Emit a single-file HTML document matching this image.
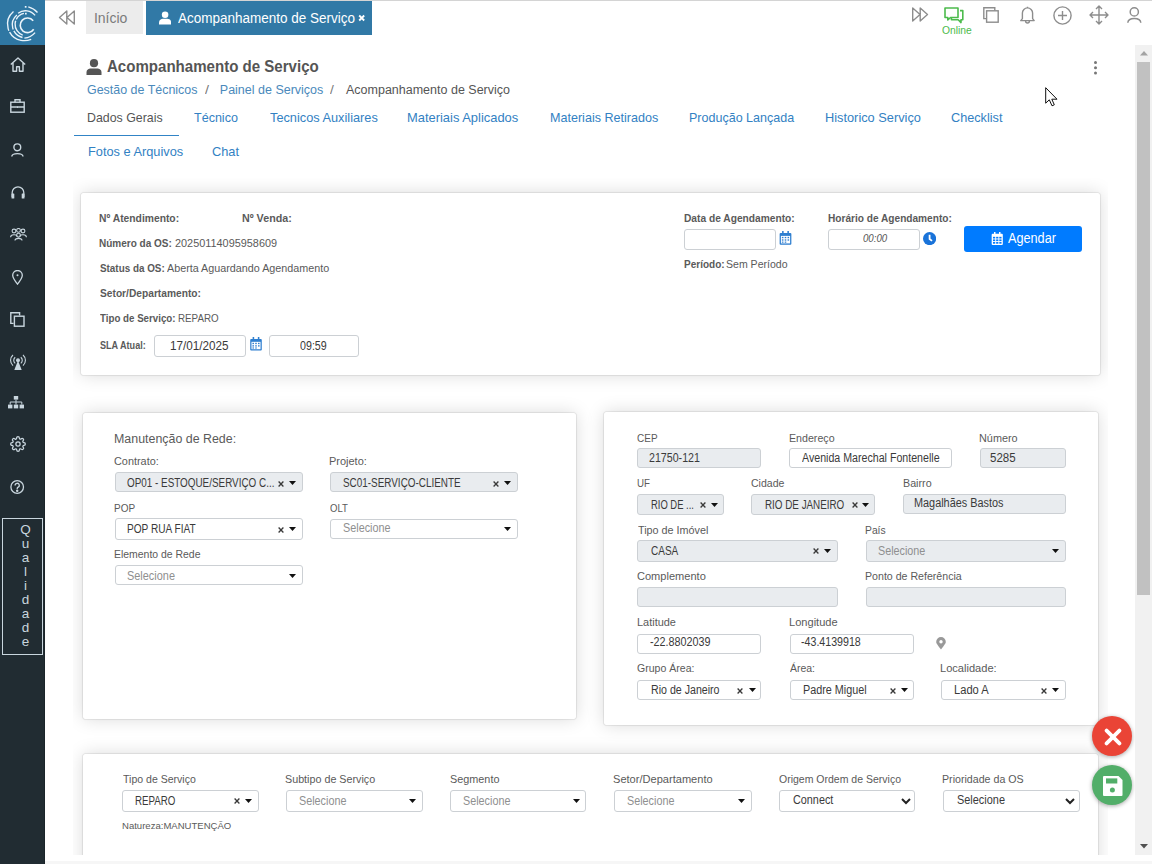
<!DOCTYPE html>
<html><head><meta charset="utf-8">
<style>
*{box-sizing:border-box;margin:0;padding:0}
html,body{width:1152px;height:864px;overflow:hidden;background:#fff;font-family:"Liberation Sans",sans-serif;color:#333}
.a{position:absolute;white-space:nowrap;line-height:normal;transform-origin:0 0}
.card{position:absolute;background:#fff;border-radius:2px;box-shadow:0 0 0 .6px rgba(0,0,0,.07),0 0 2px rgba(0,0,0,.12),0 0 18px rgba(0,0,0,.15)}
#clip{position:absolute;left:72.5px;top:177.7px;width:1035.5px;height:677.3px;overflow:hidden}
#clip .card{margin-left:-72.5px;margin-top:-177.7px}
b{color:#5a5a5a}
</style></head>
<body>

<div class="a" style="left:0;top:0;width:45px;height:864px;background:#212c32;border-right:1px solid #1a2429"></div>
<div class="a" style="left:0;top:0;width:44.5px;height:44.5px;background:#2f77a3"></div>
<svg class="a" style="left:0;top:0" width="45" height="45" viewBox="0 0 45 45" fill="none" stroke="#eaf4fb" stroke-width="1.35" stroke-linecap="butt">
  <path d="M33.2 20.7 A7.3 7.3 0 1 0 33.7 29.2" stroke-width="1.6"/>
  <path d="M23.9 13.4 A11.3 11.3 0 0 0 22.7 35.1" stroke-dasharray="10 1.5 40"/>
  <path d="M18.1 13.2 A12.3 12.3 0 0 1 35.1 15.4"/>
  <path d="M16.9 14.9 A13 13 0 0 0 22.5 37.5" stroke-dasharray="16 1.5 40"/>
  <path d="M24.4 38.2 A17.2 17.2 0 0 0 35.1 32.6"/>
  <path d="M13.5 11.5 A16.5 16.5 0 0 0 21 40.4 A19.4 19.4 0 0 0 31.2 39.4" stroke-dasharray="21 1.6 60"/>
  <path d="M28.3 6.9 A18 18 0 0 1 37.5 12.5"/>
  <rect x="24.8" y="6" width="1.7" height="1.7" fill="#eaf4fb" stroke="none"/>
  <rect x="25" y="12.8" width="1.7" height="1.7" fill="#eaf4fb" stroke="none"/>
</svg>
<!-- sidebar icons -->
<svg class="a" style="left:9.5px;top:56.5px" width="16" height="15" viewBox="0 0 16 15" fill="none" stroke="#c9d6de" stroke-width="1.4" stroke-linejoin="round"><path d="M0.8 7.6 L8 1 L15.2 7.6 M3 5.8 V14.2 H6.6 V9.8 H9.4 V14.2 H13 V5.8"/></svg>
<svg class="a" style="left:10px;top:98.5px" width="15" height="14" viewBox="0 0 15 14" fill="none" stroke="#c9d6de" stroke-width="1.4"><rect x="0.8" y="3.2" width="13.4" height="10"/><path d="M0.8 8 H14.2 M5 3.2 V0.8 H10 V3.2"/><rect x="7" y="7.5" width="1" height="1.4" fill="#c9d6de" stroke="none"/></svg>
<svg class="a" style="left:11px;top:143px" width="13" height="14" viewBox="0 0 13 14" fill="none" stroke="#c9d6de" stroke-width="1.4"><circle cx="6.3" cy="4.3" r="3.4"/><path d="M0.8 13.5 C1 9.6 11.8 9.6 12 13.5"/></svg>
<svg class="a" style="left:11px;top:186px" width="14" height="13" viewBox="0 0 14 13" fill="none" stroke="#c9d6de" stroke-width="1.3"><path d="M1.2 11 V6.6 A5.8 5.8 0 0 1 12.8 6.6 V11"/><rect x="0.5" y="7.4" width="2.8" height="5.2" rx=".6" fill="#c9d6de" stroke="none"/><rect x="10.7" y="7.4" width="2.8" height="5.2" rx=".6" fill="#c9d6de" stroke="none"/></svg>
<svg class="a" style="left:9.5px;top:227.5px" width="17" height="13" viewBox="0 0 17 13" fill="none" stroke="#c9d6de" stroke-width="1.1"><circle cx="4" cy="3" r="1.9"/><circle cx="13" cy="3" r="1.9"/><circle cx="8.5" cy="2.4" r="1.9"/><circle cx="8.5" cy="7.2" r="1.9"/><path d="M0.6 9.2 C0.6 6 7 6 7 8.5 M10 8.5 C10 6 16.4 6 16.4 9.2 M5 12.5 C5 9.6 12 9.6 12 12.5"/></svg>
<svg class="a" style="left:12px;top:270px" width="11" height="15" viewBox="0 0 11 15" fill="none" stroke="#c9d6de" stroke-width="1.3"><path d="M5.5 14.2 C1.8 9.5 0.7 7.6 0.7 5.3 A4.8 4.8 0 0 1 10.3 5.3 C10.3 7.6 9.2 9.5 5.5 14.2 Z"/><circle cx="5.5" cy="5.2" r="1" fill="#c9d6de" stroke="none"/></svg>
<svg class="a" style="left:10px;top:312px" width="15" height="15" viewBox="0 0 15 15" fill="none" stroke="#c9d6de" stroke-width="1.4"><path d="M3.6 11.4 H0.8 V0.8 H9.6 V3.4"/><rect x="4.4" y="4.2" width="9.6" height="10"/></svg>
<svg class="a" style="left:9.5px;top:353.5px" width="16" height="16" viewBox="0 0 16 16" fill="none" stroke="#c9d6de" stroke-width="1.1"><path d="M5.2 3.2 A4 4 0 0 0 5.2 9.4 M10.8 3.2 A4 4 0 0 1 10.8 9.4 M3 1 A7 7 0 0 0 3 11.6 M13 1 A7 7 0 0 1 13 11.6"/><circle cx="8" cy="6.3" r="1.4" fill="#c9d6de"/><path d="M8 6.5 L4.3 16 H11.7 Z" fill="#c9d6de" stroke="none"/></svg>
<svg class="a" style="left:8px;top:396px" width="16" height="13" viewBox="0 0 16 13" fill="#c9d6de"><rect x="5.8" y="0" width="4.4" height="3.6"/><rect x="0" y="8.6" width="4.4" height="3.8"/><rect x="5.8" y="8.6" width="4.4" height="3.8"/><rect x="11.6" y="8.6" width="4.4" height="3.8"/><path d="M8 3.6 V8.6 M2.2 8.6 V6 H13.8 V8.6" stroke="#c9d6de" stroke-width="1" fill="none"/></svg>
<svg class="a" style="left:9.5px;top:435.5px" width="16" height="16" viewBox="0 0 24 24" fill="none" stroke="#c9d6de" stroke-width="1.9"><circle cx="12" cy="12" r="3.2"/><path d="M19.4 15a1.65 1.65 0 0 0 .33 1.82l.06.06a2 2 0 0 1-2.83 2.83l-.06-.06a1.65 1.65 0 0 0-1.82-.33 1.65 1.65 0 0 0-1 1.51V21a2 2 0 0 1-4 0v-.09A1.65 1.65 0 0 0 9 19.4a1.65 1.65 0 0 0-1.82.33l-.06.06a2 2 0 0 1-2.83-2.83l.06-.06A1.65 1.65 0 0 0 4.68 15a1.65 1.65 0 0 0-1.51-1H3a2 2 0 0 1 0-4h.09A1.65 1.65 0 0 0 4.6 9a1.65 1.65 0 0 0-.33-1.82l-.06-.06a2 2 0 0 1 2.83-2.83l.06.06A1.65 1.65 0 0 0 9 4.68a1.65 1.65 0 0 0 1-1.51V3a2 2 0 0 1 4 0v.09a1.65 1.65 0 0 0 1 1.51 1.65 1.65 0 0 0 1.82-.33l.06-.06a2 2 0 0 1 2.83 2.83l-.06.06A1.65 1.65 0 0 0 19.4 9a1.65 1.65 0 0 0 1.51 1H21a2 2 0 0 1 0 4h-.09a1.65 1.65 0 0 0-1.51 1z"/></svg>
<svg class="a" style="left:10px;top:479.5px" width="15" height="15" viewBox="0 0 15 15" fill="none" stroke="#c9d6de" stroke-width="1.3"><circle cx="7.2" cy="7" r="6.3"/><path d="M5.1 5.5 A2.1 2.1 0 1 1 7.8 7.4 C7.3 7.7 7.2 8.1 7.2 8.9"/><circle cx="7.2" cy="10.7" r=".6" fill="#c9d6de"/></svg>
<div class="a" style="left:2.2px;top:518.2px;width:40.8px;height:136.6px;border:1px solid #c9d6de"></div>
<div class="a" style="left:16px;top:523px;width:19px;text-align:center;font-size:13.5px;line-height:13.95px;color:#c9d6de;white-space:normal">Q<br>u<br>a<br>l<br>i<br>d<br>a<br>d<br>e</div>

<!-- top bar -->
<div class="a" style="left:45px;top:0;width:1107px;height:1px;background:#d4d4d4"></div>
<svg class="a" style="left:58px;top:10px" width="18" height="15" viewBox="0 0 18 15" fill="none" stroke="#8d8d8d" stroke-width="1.4" stroke-linejoin="round"><path d="M8.8 1 L1.5 7.5 L8.8 14 Z M16.3 1 L9 7.5 L16.3 14 Z"/></svg>
<div class="a" style="left:86px;top:1px;width:57px;height:33.3px;background:#ececec"></div>
<div class="a" style="left:146px;top:1px;width:226px;height:33.7px;background:#3179a6"></div>
<svg class="a" style="left:158.8px;top:10.9px" width="12.2" height="13.8" viewBox="0 0 13 14" fill="#fff"><circle cx="6.5" cy="3.6" r="3.5"/><path d="M0 14 V12 C0 9.2 2.3 8 4.2 8 H8.8 C10.7 8 13 9.2 13 12 V14 Z"/></svg>
<svg class="a" style="left:358px;top:14px" width="7.4" height="8" viewBox="0 0 7 8"><path d="M1 1.5L6 6.5M6 1.5L1 6.5" stroke="#fff" stroke-width="1.8"/></svg>

<!-- right top icons -->
<svg class="a" style="left:910.5px;top:7px" width="18" height="15" viewBox="0 0 18 15" fill="none" stroke="#8d8d8d" stroke-width="1.4" stroke-linejoin="round"><path d="M9.2 1 L16.5 7.5 L9.2 14 Z M1.7 1 L9 7.5 L1.7 14 Z"/></svg>
<svg class="a" style="left:944px;top:7px" width="20" height="17" viewBox="0 0 20 17" fill="none" stroke="#4cbb4c" stroke-width="1.6" stroke-linejoin="round"><path d="M1 1 H14 V10.5 H6.5 L3.8 13 V10.5 H1 Z"/><path d="M16 3.6 H18.8 V12.8 H17 V15.6 L14.2 12.8 H7.4 V11"/></svg>
<svg class="a" style="left:982.5px;top:7px" width="16" height="16" viewBox="0 0 16 16" fill="none" stroke="#8d8d8d" stroke-width="1.4"><path d="M3.4 11.6 H0.8 V0.8 H11.8 V3.4"/><rect x="3.6" y="3.8" width="11.6" height="11.4"/></svg>
<svg class="a" style="left:1019.5px;top:6px" width="15" height="18" viewBox="0 0 15 18" fill="none" stroke="#8d8d8d" stroke-width="1.4" stroke-linejoin="round"><path d="M0.8 14.6 H14.2 L12.6 12.6 V7 A5.1 5.1 0 0 0 2.4 7 V12.6 Z M7.5 0.8 V1.8 M5.6 15 A1.9 2 0 0 0 9.4 15"/></svg>
<svg class="a" style="left:1052.5px;top:5.5px" width="19" height="19" viewBox="0 0 19 19" fill="none" stroke="#8d8d8d" stroke-width="1.4"><circle cx="9.5" cy="9.5" r="8.6"/><path d="M9.5 5 V14 M5 9.5 H14"/></svg>
<svg class="a" style="left:1088.5px;top:4.5px" width="20" height="20" viewBox="0 0 20 20" fill="none" stroke="#8d8d8d" stroke-width="1.4" stroke-linejoin="round"><path d="M10 1 V19 M1 10 H19 M7 4 L10 1 L13 4 M7 16 L10 19 L13 16 M4 7 L1 10 L4 13 M16 7 L19 10 L16 13"/></svg>
<svg class="a" style="left:1127px;top:7px" width="15" height="16" viewBox="0 0 15 16" fill="none" stroke="#8d8d8d" stroke-width="1.5"><circle cx="7.3" cy="4.9" r="4.1"/><path d="M0.8 15.8 C1.2 10.2 13.4 10.2 13.8 15.8"/></svg>

<!-- page header -->
<svg class="a" style="left:85.5px;top:58.5px" width="16" height="16" viewBox="0 0 16 16" fill="#555"><circle cx="8" cy="4.2" r="4.1"/><path d="M0.5 16 V13.6 C0.5 10.6 2.8 9.6 4.8 9.6 H11.2 C13.2 9.6 15.5 10.6 15.5 13.6 V16 Z"/></svg>
<div class="a" style="left:1093.6px;top:60.6px;width:3px;height:3px;border-radius:50%;background:#777;box-shadow:0 5.2px 0 #777,0 10.4px 0 #777"></div>
<div class="a" style="left:74px;top:135px;width:104.6px;height:1.3px;background:#3184c6"></div>

<div id="clip">
<div class="card" style="left:80.5px;top:192.8px;width:1019.7px;height:182.4px"></div>
<div class="card" style="left:82.6px;top:412.5px;width:493.4px;height:306.7px"></div>
<div class="card" style="left:604.4px;top:412.4px;width:493.7px;height:313px"></div>
<div class="card" style="left:82.7px;top:753.7px;width:1015.6px;height:126.3px"></div>
</div>
<div class="a" style="left:154.4px;top:335.4px;width:91.2px;height:21.2px;border:1px solid #ccd0d4;border-radius:3px;background:#fff"></div>
<div class="a" style="left:268.7px;top:335.4px;width:89.9px;height:21.2px;border:1px solid #ccd0d4;border-radius:3px;background:#fff"></div>
<div class="a" style="left:684.2px;top:229.2px;width:91.4px;height:20.4px;border:1px solid #ccd0d4;border-radius:3px;background:#fff"></div>
<div class="a" style="left:828.2px;top:229.4px;width:91.4px;height:20.4px;border:1px solid #ccd0d4;border-radius:3px;background:#fff"></div>
<div class="a" style="left:964px;top:226.3px;width:117.8px;height:25.3px;background:#007bff;border-radius:3px"></div>
<svg class="a" style="left:250px;top:337px" width="12" height="13.5" viewBox="0 0 12 14" fill="#2f7fd0"><rect x="0" y="2" width="12" height="12" rx="1"/><rect x="2.5" y="0" width="1.6" height="3"/><rect x="7.9" y="0" width="1.6" height="3"/><rect x="1.3" y="5" width="9.4" height="7.7" fill="#fff"/><g fill="#2f7fd0"><rect x="2.3" y="6" width="1.6" height="1.4"/><rect x="5.2" y="6" width="1.6" height="1.4"/><rect x="8.1" y="6" width="1.6" height="1.4"/><rect x="2.3" y="8.5" width="1.6" height="1.4"/><rect x="5.2" y="8.5" width="1.6" height="1.4"/><rect x="8.1" y="8.5" width="1.6" height="1.4"/><rect x="2.3" y="10.8" width="1.6" height="1.2"/><rect x="5.2" y="10.8" width="1.6" height="1.2"/></g></svg>
<svg class="a" style="left:779px;top:231px" width="13" height="13.7" viewBox="0 0 12 14" fill="#2f7fd0"><rect x="0" y="2" width="12" height="12" rx="1"/><rect x="2.5" y="0" width="1.6" height="3"/><rect x="7.9" y="0" width="1.6" height="3"/><rect x="1.3" y="5" width="9.4" height="7.7" fill="#fff"/><g fill="#2f7fd0"><rect x="2.3" y="6" width="1.6" height="1.4"/><rect x="5.2" y="6" width="1.6" height="1.4"/><rect x="8.1" y="6" width="1.6" height="1.4"/><rect x="2.3" y="8.5" width="1.6" height="1.4"/><rect x="5.2" y="8.5" width="1.6" height="1.4"/><rect x="8.1" y="8.5" width="1.6" height="1.4"/><rect x="2.3" y="10.8" width="1.6" height="1.2"/><rect x="5.2" y="10.8" width="1.6" height="1.2"/></g></svg>
<svg class="a" style="left:923px;top:231.5px" width="13.2" height="13.2" viewBox="0 0 14 14"><circle cx="7" cy="7" r="7" fill="#1a73d9"/><path d="M7 3 V7.5 L9.6 9.4" stroke="#fff" stroke-width="1.9" fill="none"/></svg>
<svg class="a" style="left:991px;top:232px" width="12.5" height="13" viewBox="0 0 12 14" fill="#fff"><rect x="0" y="2" width="12" height="12" rx="1"/><rect x="2.5" y="0" width="1.6" height="3"/><rect x="7.9" y="0" width="1.6" height="3"/><g fill="#007bff"><rect x="1.4" y="5.2" width="2.4" height="1.8"/><rect x="4.8" y="5.2" width="2.4" height="1.8"/><rect x="8.2" y="5.2" width="2.4" height="1.8"/><rect x="1.4" y="8" width="2.4" height="1.8"/><rect x="4.8" y="8" width="2.4" height="1.8"/><rect x="8.2" y="8" width="2.4" height="1.8"/><rect x="1.4" y="10.8" width="2.4" height="1.8"/><rect x="4.8" y="10.8" width="2.4" height="1.8"/><rect x="8.2" y="10.8" width="2.4" height="1.8"/></g></svg>

<div class="a" style="left:115.2px;top:472.2px;width:187.5px;height:20.3px;border:1px solid #ccd0d4;border-radius:3px;background:#e9ecef"></div>
<svg class="a" style="left:277.8px;top:480.8px" width="6" height="6" viewBox="0 0 6 6"><path d="M.6 .6L5.4 5.4M5.4 .6L.6 5.4" stroke="#3a3a3a" stroke-width="1.35"/></svg>
<svg class="a" style="left:288.9px;top:480.8px" width="7" height="4" viewBox="0 0 7 4"><path d="M0 0H7L3.5 4Z" fill="#111"/></svg>
<div class="a" style="left:330px;top:472.2px;width:187.6px;height:20.3px;border:1px solid #ccd0d4;border-radius:3px;background:#e9ecef"></div>
<svg class="a" style="left:492.5px;top:480.8px" width="6" height="6" viewBox="0 0 6 6"><path d="M.6 .6L5.4 5.4M5.4 .6L.6 5.4" stroke="#3a3a3a" stroke-width="1.35"/></svg>
<svg class="a" style="left:504px;top:480.8px" width="7" height="4" viewBox="0 0 7 4"><path d="M0 0H7L3.5 4Z" fill="#111"/></svg>
<div class="a" style="left:115.2px;top:518.2px;width:187.5px;height:21.4px;border:1px solid #ccd0d4;border-radius:3px;background:#fff"></div>
<svg class="a" style="left:277.8px;top:527px" width="6" height="6" viewBox="0 0 6 6"><path d="M.6 .6L5.4 5.4M5.4 .6L.6 5.4" stroke="#3a3a3a" stroke-width="1.35"/></svg>
<svg class="a" style="left:288.9px;top:527px" width="7" height="4" viewBox="0 0 7 4"><path d="M0 0H7L3.5 4Z" fill="#111"/></svg>
<div class="a" style="left:330px;top:518.6px;width:187.6px;height:20.8px;border:1px solid #ccd0d4;border-radius:3px;background:#fff"></div>
<svg class="a" style="left:504px;top:527px" width="7" height="4" viewBox="0 0 7 4"><path d="M0 0H7L3.5 4Z" fill="#111"/></svg>
<div class="a" style="left:115.2px;top:565.1px;width:187.5px;height:20.3px;border:1px solid #ccd0d4;border-radius:3px;background:#fff"></div>
<svg class="a" style="left:288.9px;top:573.6px" width="7" height="4" viewBox="0 0 7 4"><path d="M0 0H7L3.5 4Z" fill="#111"/></svg>
<div class="a" style="left:637.3px;top:448.3px;width:124.1px;height:20.2px;border:1px solid #ccd0d4;border-radius:3px;background:#e9ecef"></div>
<div class="a" style="left:789.1px;top:448.3px;width:162.5px;height:20.2px;border:1px solid #ccd0d4;border-radius:3px;background:#fff"></div>
<div class="a" style="left:979.5px;top:448.4px;width:86.3px;height:20px;border:1px solid #ccd0d4;border-radius:3px;background:#e9ecef"></div>
<div class="a" style="left:637.3px;top:494.1px;width:86.3px;height:21.2px;border:1px solid #ccd0d4;border-radius:3px;background:#e9ecef"></div>
<svg class="a" style="left:699.7px;top:502.3px" width="6" height="6" viewBox="0 0 6 6"><path d="M.6 .6L5.4 5.4M5.4 .6L.6 5.4" stroke="#3a3a3a" stroke-width="1.35"/></svg>
<svg class="a" style="left:710.8px;top:503px" width="7" height="4" viewBox="0 0 7 4"><path d="M0 0H7L3.5 4Z" fill="#111"/></svg>
<div class="a" style="left:751.3px;top:494.1px;width:124.1px;height:21.2px;border:1px solid #ccd0d4;border-radius:3px;background:#e9ecef"></div>
<svg class="a" style="left:851.5px;top:502.3px" width="6" height="6" viewBox="0 0 6 6"><path d="M.6 .6L5.4 5.4M5.4 .6L.6 5.4" stroke="#3a3a3a" stroke-width="1.35"/></svg>
<svg class="a" style="left:862px;top:503px" width="7" height="4" viewBox="0 0 7 4"><path d="M0 0H7L3.5 4Z" fill="#111"/></svg>
<div class="a" style="left:903.3px;top:494.3px;width:162.5px;height:20.2px;border:1px solid #ccd0d4;border-radius:3px;background:#e9ecef"></div>
<div class="a" style="left:637.3px;top:540px;width:200.5px;height:21.6px;border:1px solid #ccd0d4;border-radius:3px;background:#e9ecef"></div>
<svg class="a" style="left:813.2px;top:548.3px" width="6" height="6" viewBox="0 0 6 6"><path d="M.6 .6L5.4 5.4M5.4 .6L.6 5.4" stroke="#3a3a3a" stroke-width="1.35"/></svg>
<svg class="a" style="left:824.3px;top:549px" width="7" height="4" viewBox="0 0 7 4"><path d="M0 0H7L3.5 4Z" fill="#111"/></svg>
<div class="a" style="left:865.5px;top:540px;width:200px;height:21.6px;border:1px solid #ccd0d4;border-radius:3px;background:#e9ecef"></div>
<svg class="a" style="left:1051.8px;top:549px" width="7" height="4" viewBox="0 0 7 4"><path d="M0 0H7L3.5 4Z" fill="#111"/></svg>
<div class="a" style="left:637.3px;top:587.2px;width:200.5px;height:20.3px;border:1px solid #ccd0d4;border-radius:3px;background:#e9ecef"></div>
<div class="a" style="left:865.5px;top:587.2px;width:200px;height:20.3px;border:1px solid #ccd0d4;border-radius:3px;background:#e9ecef"></div>
<div class="a" style="left:637.2px;top:633.5px;width:124px;height:20px;border:1px solid #ccd0d4;border-radius:3px;background:#fff"></div>
<div class="a" style="left:789.6px;top:633.5px;width:124.1px;height:20px;border:1px solid #ccd0d4;border-radius:3px;background:#fff"></div>
<svg class="a" style="left:936px;top:637px" width="10" height="13" viewBox="0 0 10 13" fill="#999"><path d="M5 12.5C1.6 7.8 0.2 6.4 0.2 4.9A4.8 4.8 0 0 1 9.8 4.9C9.8 6.4 8.4 7.8 5 12.5Z"/><circle cx="5" cy="4.8" r="1.7" fill="#fff"/></svg>
<div class="a" style="left:637.3px;top:679.9px;width:124.1px;height:19.7px;border:1px solid #ccd0d4;border-radius:3px;background:#fff"></div>
<svg class="a" style="left:737.4px;top:687.5px" width="6" height="6" viewBox="0 0 6 6"><path d="M.6 .6L5.4 5.4M5.4 .6L.6 5.4" stroke="#3a3a3a" stroke-width="1.35"/></svg>
<svg class="a" style="left:748.6px;top:688px" width="7" height="4" viewBox="0 0 7 4"><path d="M0 0H7L3.5 4Z" fill="#111"/></svg>
<div class="a" style="left:789.6px;top:679.9px;width:124.1px;height:19.7px;border:1px solid #ccd0d4;border-radius:3px;background:#fff"></div>
<svg class="a" style="left:889.5px;top:687.5px" width="6" height="6" viewBox="0 0 6 6"><path d="M.6 .6L5.4 5.4M5.4 .6L.6 5.4" stroke="#3a3a3a" stroke-width="1.35"/></svg>
<svg class="a" style="left:900.6px;top:688px" width="7" height="4" viewBox="0 0 7 4"><path d="M0 0H7L3.5 4Z" fill="#111"/></svg>
<div class="a" style="left:941.3px;top:679.7px;width:124.5px;height:20px;border:1px solid #ccd0d4;border-radius:3px;background:#fff"></div>
<svg class="a" style="left:1040.8px;top:687.5px" width="6" height="6" viewBox="0 0 6 6"><path d="M.6 .6L5.4 5.4M5.4 .6L.6 5.4" stroke="#3a3a3a" stroke-width="1.35"/></svg>
<svg class="a" style="left:1051.8px;top:688px" width="7" height="4" viewBox="0 0 7 4"><path d="M0 0H7L3.5 4Z" fill="#111"/></svg>
<div class="a" style="left:122px;top:790.2px;width:136.6px;height:21.4px;border:1px solid #ccd0d4;border-radius:3px;background:#fff"></div>
<svg class="a" style="left:234.4px;top:798.2px" width="6" height="6" viewBox="0 0 6 6"><path d="M.6 .6L5.4 5.4M5.4 .6L.6 5.4" stroke="#3a3a3a" stroke-width="1.35"/></svg>
<svg class="a" style="left:244.8px;top:798.8px" width="7" height="4" viewBox="0 0 7 4"><path d="M0 0H7L3.5 4Z" fill="#111"/></svg>
<div class="a" style="left:286.4px;top:790.2px;width:136.4px;height:21.4px;border:1px solid #ccd0d4;border-radius:3px;background:#fff"></div>
<svg class="a" style="left:409px;top:798.8px" width="7" height="4" viewBox="0 0 7 4"><path d="M0 0H7L3.5 4Z" fill="#111"/></svg>
<div class="a" style="left:450.3px;top:790.2px;width:136.1px;height:21.4px;border:1px solid #ccd0d4;border-radius:3px;background:#fff"></div>
<svg class="a" style="left:572.6px;top:798.8px" width="7" height="4" viewBox="0 0 7 4"><path d="M0 0H7L3.5 4Z" fill="#111"/></svg>
<div class="a" style="left:614.4px;top:790.2px;width:137.3px;height:21.4px;border:1px solid #ccd0d4;border-radius:3px;background:#fff"></div>
<svg class="a" style="left:737.9px;top:798.8px" width="7" height="4" viewBox="0 0 7 4"><path d="M0 0H7L3.5 4Z" fill="#111"/></svg>
<div class="a" style="left:779.2px;top:790.2px;width:136.1px;height:21.4px;border:1px solid #ccd0d4;border-radius:3px;background:#fff"></div>
<svg class="a" style="left:900.9px;top:798px" width="10" height="7" viewBox="0 0 10 7"><path d="M1 1L5 5L9 1" fill="none" stroke="#222" stroke-width="2"/></svg>
<div class="a" style="left:943px;top:790.2px;width:136.7px;height:21.4px;border:1px solid #ccd0d4;border-radius:3px;background:#fff"></div>
<svg class="a" style="left:1065.3px;top:798px" width="10" height="7" viewBox="0 0 10 7"><path d="M1 1L5 5L9 1" fill="none" stroke="#222" stroke-width="2"/></svg>
<div class="a" style="left:93.9px;top:10px;font-size:14px;color:#7b7b7b;">Início</div>
<div class="a" style="left:178.4px;top:10px;font-size:14px;color:#fff;transform:scaleX(0.9634);">Acompanhamento de Serviço</div>
<div class="a" style="left:942px;top:24px;font-size:11px;color:#4cbb4c;transform:scaleX(0.9375);">Online</div>
<div class="a" style="left:107.29px;top:57px;font-size:16.5px;font-weight:bold;color:#555;transform:scaleX(0.9126);">Acompanhamento de Serviço</div>
<div class="a" style="left:86.5px;top:83px;font-size:12.5px;color:#4a89bb;transform:scaleX(0.9955);">Gestão de Técnicos</div>
<div class="a" style="left:205.4px;top:83px;font-size:12.5px;color:#777;transform:scaleX(1.1500);">/</div>
<div class="a" style="left:219.8px;top:83px;font-size:12.5px;color:#4a89bb;">Painel de Serviços</div>
<div class="a" style="left:330.4px;top:83px;font-size:12.5px;color:#777;transform:scaleX(1.1000);">/</div>
<div class="a" style="left:346px;top:83px;font-size:12.5px;color:#555;">Acompanhamento de Serviço</div>
<div class="a" style="left:87.35px;top:110px;font-size:13px;color:#555;transform:scaleX(0.9513);">Dados Gerais</div>
<div class="a" style="left:194.4px;top:110px;font-size:13px;color:#3281c3;transform:scaleX(0.9644);">Técnico</div>
<div class="a" style="left:269.7px;top:110px;font-size:13px;color:#3281c3;transform:scaleX(0.9817);">Tecnicos Auxiliares</div>
<div class="a" style="left:407.31px;top:110px;font-size:13px;color:#3281c3;transform:scaleX(0.9928);">Materiais Aplicados</div>
<div class="a" style="left:549.53px;top:110px;font-size:13px;color:#3281c3;transform:scaleX(0.9667);">Materiais Retirados</div>
<div class="a" style="left:689.04px;top:110px;font-size:13px;color:#3281c3;transform:scaleX(0.9630);">Produção Lançada</div>
<div class="a" style="left:824.62px;top:110px;font-size:13px;color:#3281c3;transform:scaleX(0.9833);">Historico Serviço</div>
<div class="a" style="left:950.62px;top:110px;font-size:13px;color:#3281c3;transform:scaleX(0.9750);">Checklist</div>
<div class="a" style="left:87.62px;top:144px;font-size:13px;color:#3281c3;transform:scaleX(0.9832);">Fotos e Arquivos</div>
<div class="a" style="left:212.32px;top:144px;font-size:13px;color:#3281c3;transform:scaleX(0.9846);">Chat</div>
<div class="a" style="left:98.86px;top:212px;font-size:11px;font-weight:bold;color:#5a5a5a;transform:scaleX(0.9369);">Nº Atendimento:</div>
<div class="a" style="left:242.03px;top:212px;font-size:11px;font-weight:bold;color:#5a5a5a;transform:scaleX(0.9735);">Nº Venda:</div>
<div class="a" style="left:98.89px;top:237px;font-size:11px;font-weight:bold;color:#5a5a5a;transform:scaleX(0.9103);">Número da OS:</div>
<div class="a" style="left:174.7px;top:237px;font-size:11px;color:#5a5a5a;transform:scaleX(0.9893);">20250114095958609</div>
<div class="a" style="left:99.8px;top:262px;font-size:11px;font-weight:bold;color:#5a5a5a;transform:scaleX(0.8972);">Status da OS:</div>
<div class="a" style="left:167.4px;top:262px;font-size:11px;color:#5a5a5a;transform:scaleX(0.9783);">Aberta Aguardando Agendamento</div>
<div class="a" style="left:99.7px;top:287px;font-size:11px;font-weight:bold;color:#5a5a5a;transform:scaleX(0.9278);">Setor/Departamento:</div>
<div class="a" style="left:99.7px;top:312px;font-size:11px;font-weight:bold;color:#5a5a5a;transform:scaleX(0.8847);">Tipo de Serviço:</div>
<div class="a" style="left:177.91px;top:312px;font-size:11px;color:#5a5a5a;transform:scaleX(0.8909);">REPARO</div>
<div class="a" style="left:99.7px;top:339px;font-size:10.5px;font-weight:bold;color:#5a5a5a;transform:scaleX(0.8654);">SLA Atual:</div>
<div class="a" style="left:170.42px;top:339px;font-size:12px;color:#3a3a3a;transform:scaleX(0.9763);">17/01/2025</div>
<div class="a" style="left:300.3px;top:339px;font-size:12px;color:#3a3a3a;transform:scaleX(0.8900);">09:59</div>
<div class="a" style="left:683.67px;top:212px;font-size:11px;font-weight:bold;color:#5a5a5a;transform:scaleX(0.9271);">Data de Agendamento:</div>
<div class="a" style="left:684.29px;top:258px;font-size:11px;font-weight:bold;color:#5a5a5a;transform:scaleX(0.9093);">Período:</div>
<div class="a" style="left:726.44px;top:258px;font-size:11px;color:#5a5a5a;transform:scaleX(0.9587);">Sem Período</div>
<div class="a" style="left:827.78px;top:212px;font-size:11px;font-weight:bold;color:#5a5a5a;transform:scaleX(0.9195);">Horário de Agendamento:</div>
<div class="a" style="left:862.7px;top:232px;font-size:11px;color:#555;transform:scaleX(0.8786);"><i>00:00</i></div>
<div class="a" style="left:1007.5px;top:230px;font-size:14px;color:#fff;transform:scaleX(0.9057);">Agendar</div>
<div class="a" style="left:114.21px;top:432px;font-size:12.5px;color:#5a5a5a;transform:scaleX(0.9926);">Manutenção de Rede:</div>
<div class="a" style="left:114.21px;top:455px;font-size:11px;color:#5a5a5a;transform:scaleX(0.9884);">Contrato:</div>
<div class="a" style="left:127.38px;top:476px;font-size:12px;color:#3a3a3a;transform:scaleX(0.8237);">OP01 - ESTOQUE/SERVIÇO C...</div>
<div class="a" style="left:328.9px;top:455px;font-size:11px;color:#5a5a5a;">Projeto:</div>
<div class="a" style="left:342.57px;top:476px;font-size:12px;color:#3a3a3a;transform:scaleX(0.8255);">SC01-SERVIÇO-CLIENTE</div>
<div class="a" style="left:114.29px;top:502px;font-size:11px;color:#5a5a5a;transform:scaleX(0.9091);">POP</div>
<div class="a" style="left:127.36px;top:522px;font-size:12px;color:#3a3a3a;transform:scaleX(0.8407);">POP RUA FIAT</div>
<div class="a" style="left:330px;top:502px;font-size:11px;color:#5a5a5a;transform:scaleX(0.8700);">OLT</div>
<div class="a" style="left:342.5px;top:521px;font-size:12px;color:#8f8f8f;transform:scaleX(0.9020);">Selecione</div>
<div class="a" style="left:114.25px;top:548px;font-size:11px;color:#5a5a5a;transform:scaleX(0.9489);">Elemento de Rede</div>
<div class="a" style="left:127.29px;top:569px;font-size:12px;color:#8f8f8f;transform:scaleX(0.9098);">Selecione</div>
<div class="a" style="left:636.69px;top:432px;font-size:11px;color:#5a5a5a;transform:scaleX(0.9095);">CEP</div>
<div class="a" style="left:649.11px;top:451px;font-size:12px;color:#3a3a3a;transform:scaleX(0.8875);">21750-121</div>
<div class="a" style="left:788.53px;top:432px;font-size:11px;color:#5a5a5a;transform:scaleX(0.9674);">Endereço</div>
<div class="a" style="left:801.5px;top:451px;font-size:12px;color:#3a3a3a;transform:scaleX(0.8865);">Avenida Marechal Fontenelle</div>
<div class="a" style="left:978.51px;top:432px;font-size:11px;color:#5a5a5a;transform:scaleX(0.9868);">Número</div>
<div class="a" style="left:990.04px;top:451px;font-size:12px;color:#3a3a3a;transform:scaleX(0.9600);">5285</div>
<div class="a" style="left:636.72px;top:477px;font-size:11px;color:#5a5a5a;transform:scaleX(0.8846);">UF</div>
<div class="a" style="left:650.62px;top:498px;font-size:12px;color:#3a3a3a;transform:scaleX(0.7849);">RIO DE ...</div>
<div class="a" style="left:750.74px;top:477px;font-size:11px;color:#5a5a5a;transform:scaleX(0.9588);">Cidade</div>
<div class="a" style="left:764.78px;top:498px;font-size:12px;color:#3a3a3a;transform:scaleX(0.8200);">RIO DE JANEIRO</div>
<div class="a" style="left:902.73px;top:477px;font-size:11px;color:#5a5a5a;transform:scaleX(0.9750);">Bairro</div>
<div class="a" style="left:914.49px;top:496px;font-size:12px;color:#3a3a3a;transform:scaleX(0.9062);">Magalhães Bastos</div>
<div class="a" style="left:637.6px;top:524px;font-size:11px;color:#5a5a5a;transform:scaleX(0.9817);">Tipo de Imóvel</div>
<div class="a" style="left:650.57px;top:544px;font-size:12px;color:#3a3a3a;transform:scaleX(0.8344);">CASA</div>
<div class="a" style="left:864.56px;top:524px;font-size:11px;color:#5a5a5a;transform:scaleX(0.9381);">País</div>
<div class="a" style="left:878px;top:544px;font-size:12px;color:#8f8f8f;transform:scaleX(0.8980);">Selecione</div>
<div class="a" style="left:636.6px;top:570px;font-size:11px;color:#5a5a5a;transform:scaleX(1.0045);">Complemento</div>
<div class="a" style="left:864.54px;top:570px;font-size:11px;color:#5a5a5a;transform:scaleX(0.9646);">Ponto de Referência</div>
<div class="a" style="left:637.01px;top:616px;font-size:11px;color:#5a5a5a;transform:scaleX(0.9947);">Latitude</div>
<div class="a" style="left:649.5px;top:635px;font-size:12px;color:#3a3a3a;transform:scaleX(0.8985);">-22.8802039</div>
<div class="a" style="left:788.59px;top:616px;font-size:11px;color:#5a5a5a;transform:scaleX(1.0064);">Longitude</div>
<div class="a" style="left:801.3px;top:635px;font-size:12px;color:#3a3a3a;transform:scaleX(0.8866);">-43.4139918</div>
<div class="a" style="left:637.04px;top:662px;font-size:11px;color:#5a5a5a;transform:scaleX(0.9586);">Grupo Área:</div>
<div class="a" style="left:650.61px;top:683px;font-size:12px;color:#3a3a3a;transform:scaleX(0.8855);">Rio de Janeiro</div>
<div class="a" style="left:789.6px;top:662px;font-size:11px;color:#5a5a5a;transform:scaleX(0.9520);">Área:</div>
<div class="a" style="left:802.5px;top:683px;font-size:12px;color:#3a3a3a;transform:scaleX(0.9000);">Padre Miguel</div>
<div class="a" style="left:940.29px;top:662px;font-size:11px;color:#5a5a5a;transform:scaleX(1.0074);">Localidade:</div>
<div class="a" style="left:953.67px;top:683px;font-size:12px;color:#3a3a3a;transform:scaleX(0.9278);">Lado A</div>
<div class="a" style="left:122.8px;top:773px;font-size:11px;color:#5a5a5a;transform:scaleX(0.9579);">Tipo de Serviço</div>
<div class="a" style="left:134.99px;top:794px;font-size:12px;color:#3a3a3a;transform:scaleX(0.8104);">REPARO</div>
<div class="a" style="left:121.8px;top:820px;font-size:9.5px;color:#5a5a5a;transform:scaleX(1.0047);">Natureza:MANUTENÇÃO</div>
<div class="a" style="left:285.42px;top:773px;font-size:11px;color:#5a5a5a;transform:scaleX(0.9769);">Subtipo de Serviço</div>
<div class="a" style="left:298.8px;top:794px;font-size:12px;color:#8f8f8f;transform:scaleX(0.9000);">Selecione</div>
<div class="a" style="left:449.61px;top:773px;font-size:11px;color:#5a5a5a;transform:scaleX(0.9857);">Segmento</div>
<div class="a" style="left:463.3px;top:794px;font-size:12px;color:#8f8f8f;transform:scaleX(0.9000);">Selecione</div>
<div class="a" style="left:613.39px;top:773px;font-size:11px;color:#5a5a5a;transform:scaleX(1.0061);">Setor/Departamento</div>
<div class="a" style="left:627.4px;top:794px;font-size:12px;color:#8f8f8f;transform:scaleX(0.9000);">Selecione</div>
<div class="a" style="left:778.9px;top:773px;font-size:11px;color:#5a5a5a;transform:scaleX(0.9547);">Origem Ordem de Serviço</div>
<div class="a" style="left:792.7px;top:793px;font-size:12px;color:#3a3a3a;transform:scaleX(0.9023);">Connect</div>
<div class="a" style="left:942.03px;top:773px;font-size:11px;color:#5a5a5a;transform:scaleX(0.9675);">Prioridade da OS</div>
<div class="a" style="left:956.59px;top:793px;font-size:12px;color:#3a3a3a;transform:scaleX(0.9098);">Selecione</div>
<!-- bottom clip -->
<div class="a" style="left:45px;top:855px;width:1107px;height:9px;background:#fff"></div>
<div class="a" style="left:45px;top:860.7px;width:1107px;height:3.3px;background:#f6f6f6"></div>
<div class="a" style="left:1108px;top:45px;width:27px;height:810px;background:#fff"></div>

<!-- FABs -->
<div class="a" style="left:1091.7px;top:716.4px;width:40px;height:40px;border-radius:50%;background:#ea4436;box-shadow:0 1px 4px rgba(0,0,0,.35)"></div>
<svg class="a" style="left:1104px;top:727.5px" width="18" height="18" viewBox="0 0 18 18" stroke="#fff" stroke-width="3.8" stroke-linecap="round"><path d="M2.6 2.6 L15.4 15.4 M15.4 2.6 L2.6 15.4"/></svg>
<div class="a" style="left:1091.7px;top:765.2px;width:40px;height:40px;border-radius:50%;background:#52ae69;box-shadow:0 1px 4px rgba(0,0,0,.35)"></div>
<svg class="a" style="left:1103.3px;top:776px" width="19.5" height="20" viewBox="0 0 19.5 20"><path d="M0 1 Q0 0 1 0 H15.5 L19.5 4 V19 Q19.5 20 18.5 20 H1 Q0 20 0 19 Z" fill="#fff"/><rect x="3" y="2.4" width="11.3" height="5.1" fill="#52ae69"/><circle cx="9.4" cy="14.1" r="2.5" fill="#52ae69"/></svg>

<!-- scrollbar -->
<div class="a" style="left:1135px;top:45px;width:17px;height:810px;background:#f1f1f1"></div>
<div class="a" style="left:1137px;top:62px;width:13px;height:533px;background:#c1c1c1"></div>
<svg class="a" style="left:1139.5px;top:51px" width="8" height="5" viewBox="0 0 8 5"><path d="M0 4.5H8L4 0Z" fill="#a3a3a3"/></svg>
<svg class="a" style="left:1139.5px;top:843.5px" width="8" height="5" viewBox="0 0 8 5"><path d="M0 0H8L4 4.5Z" fill="#505050"/></svg>

<!-- cursor -->
<svg class="a" style="left:1044.8px;top:86.6px" width="13" height="21" viewBox="0 0 13 21"><path d="M0.7 0.7 V16.2 L4.3 12.8 L7 18.8 L9.3 17.8 L6.8 12.2 H12 Z" fill="#fff" stroke="#111" stroke-width="1" stroke-linejoin="round"/></svg>
</body></html>
